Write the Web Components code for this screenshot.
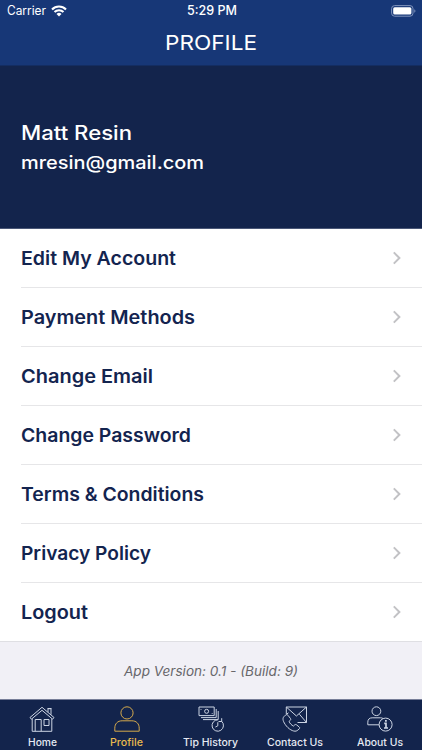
<!DOCTYPE html>
<html lang="en">
<head>
<meta charset="utf-8">
<title>Profile</title>
<style>
    html, body {
        margin: 0;
        height: 100%;
        overflow: hidden;
        font-family: Inter, "Liberation Sans", sans-serif;
    }
</style>
</head>
<body>
<profile-screen></profile-screen>

<script>
// Text stretched horizontally to a given width
class FitText extends HTMLElement {

    constructor() {
        super();
        this.attachShadow({ mode: 'open' });
    }

    connectedCallback() {
        this.shadowRoot.innerHTML = `
            <style>
                :host {
                    display: block;
                    width: max-content;
                    white-space: nowrap;
                }
                span {
                    display: inline-block;
                    transform-origin: 0 50%;
                }
            </style>
            <span><slot></slot></span>
        `;
        const span = this.shadowRoot.querySelector('span');
        const wanted = Number(this.getAttribute('width'));
        const natural = span.getBoundingClientRect().width;
        if (wanted && natural) {
            span.style.transform = `scaleX(${wanted / natural})`;
            this.style.width = `${wanted}px`;
        }
    }
}

class StatusBar extends HTMLElement {

    constructor() {
        super();
        this.attachShadow({ mode: 'open' });
    }

    connectedCallback() {
        this.shadowRoot.innerHTML = `
            <style>
                :host {
                    display: grid;
                    grid-template-columns: 1fr auto 1fr;
                    align-items: center;
                    height: 22px;
                    padding: 0 6px 0 7px;
                    color: #fff;
                    font-size: 12.5px;
                    line-height: 22px;
                }
                .carrier {
                    display: flex;
                    align-items: center;
                    gap: 5px;
                }
                .time {
                    font-weight: 550;
                }
                .battery {
                    justify-self: end;
                }
                svg {
                    display: block;
                }
            </style>
            <div class="carrier">
                <fit-text width="39">Carrier</fit-text>
                <svg width="16" height="12" viewBox="0 0 16 12" fill="none" stroke="#fff" stroke-width="2.1">
                    <path d="M1 4.4a10 10 0 0 1 14 0M3.5 7a6.5 6.5 0 0 1 9 0"/>
                    <path d="M8 11.5 5.5 9a3.6 3.6 0 0 1 5 0z" fill="#fff" stroke="none"/>
                </svg>
            </div>
            <fit-text class="time" width="50">5:29 PM</fit-text>
            <svg class="battery" width="25" height="12" viewBox="0 0 25 12">
                <rect x=".6" y=".6" width="21.4" height="10.6" rx="3" fill="none" stroke="#8094bd"/>
                <rect x="2.2" y="2.2" width="18.2" height="7.4" rx="1.5" fill="#fff"/>
                <path d="M23.3 4.2a2 2 0 0 1 0 3.6z" fill="#8094bd"/>
            </svg>
        `;
    }
}

class MenuRow extends HTMLElement {

    constructor() {
        super();
        this.attachShadow({ mode: 'open' });
    }

    connectedCallback() {
        this.shadowRoot.innerHTML = `
            <style>
                :host {
                    display: block;
                    padding-left: 21px;
                    background: #fff;
                    color: #13244f;
                }
                .row {
                    display: flex;
                    align-items: center;
                    justify-content: space-between;
                    box-sizing: border-box;
                    height: 59px;
                    padding-right: 20px;
                    border-bottom: 1px solid #e6e6e8;
                    font-size: 18.5px;
                    font-weight: 600;
                    line-height: 24px;
                }
                :host([last]) .row {
                    height: 58px;
                    border-bottom: none;
                }
            </style>
            <div class="row">
                <fit-text width="${this.getAttribute('width')}">${this.getAttribute('label')}</fit-text>
                <svg width="10" height="14" viewBox="0 0 10 14" fill="none" stroke="#c2c2c5" stroke-width="2">
                    <path d="M1.8 1.4 7.4 7l-5.6 5.6"/>
                </svg>
            </div>
        `;
    }
}

const icons = {
    home: `
        <path d="M1 11.5 13 1.3l12 10.2-1.4 1.7L13 4.3 2.4 13.2zM3.2 12.7v12.6h19.6V12.7M19 6.2V2.7h3v6M18.5 2.5h4"/>
        <path d="M6.2 25.3V13.5h6v11.8M15 13.5h5v6h-5z"/>`,
    profile: `
        <circle cx="13" cy="6.9" r="6.1"/>
        <path d="M.8 25.2v-3c0-4.5 2.8-7.4 7.3-7.4h9.8c4.5 0 7.3 2.9 7.3 7.4v3z"/>`,
    history: `
        <path d="M1 1h15.2v8.6H1zM3 11.6h15.2V3M5 13.6h15.2V5"/>
        <circle cx="8.6" cy="5.3" r="2"/>
        <path d="M3 3v.8M14.2 7v.8M23.5 15.2a5.7 5.7 0 1 1-3.6-1.4M23.7 12.2v3.3h-3.2M19.8 16.2v3.6l-2.4 1.2"/>`,
    contact: `
        <path d="M4.3 8V1h20.2v15.5H15.5M4.3 1l10.1 9L24.5 1M24.5 16.5l-7.1-8.3M4.5 8.2l2-1.4"/>
        <path d="M3.4 9.2 1.8 10.8c-1.6 1.8-.8 5 2.6 9.2 3.8 4.4 8.3 6.2 10.8 4.6l2.1-1.8c.6-.6.5-1.2 0-1.7l-2.8-2.3c-.6-.4-1.2-.4-1.8.1l-1.3 1.2c-1.7-.8-3.6-2.8-4.4-4.6l1.3-1.2c.5-.5.6-1.1.2-1.7L6 9.3c-.7-.8-1.8-.9-2.6-.1z"/>`,
    about: `
        <circle cx="9.4" cy="5.2" r="4.4"/>
        <path d="M12 18.8H.8v-2.6c0-2.9 1.7-4.4 4.4-4.4h8.2c1 0 1.8.2 2.5.6"/>
        <circle cx="18.6" cy="18.6" r="6.5"/>
        <path d="M17.2 17.3H19v4.5M17 22h4" stroke-width="1.7"/>
        <path d="M18.9 14v1.7" stroke-width="1.8"/>`
};

class TabItem extends HTMLElement {

    constructor() {
        super();
        this.attachShadow({ mode: 'open' });
    }

    connectedCallback() {
        this.shadowRoot.innerHTML = `
            <style>
                :host {
                    display: flex;
                    flex-direction: column;
                    align-items: center;
                    padding-top: 6px;
                    color: #e6eaf3;
                    --stroke: #ccd4e3;
                }
                :host([active]) {
                    color: #e8b94e;
                    --stroke: #d6aa4c;
                }
                svg {
                    display: block;
                    stroke: var(--stroke);
                }
                fit-text {
                    margin-top: 3px;
                    font-size: 10px;
                    font-weight: 500;
                    line-height: 14px;
                }
            </style>
            <svg width="26" height="26" viewBox="0 0 26 26" fill="none">${icons[this.getAttribute('icon')]}</svg>
            <fit-text width="${this.getAttribute('width')}">${this.getAttribute('label')}</fit-text>
        `;
    }
}

class ProfileScreen extends HTMLElement {

    constructor() {
        super();
        this.attachShadow({ mode: 'open' });
    }

    connectedCallback() {
        this.render();
    }

    render() {
        this.shadowRoot.innerHTML = `
            <style>
                :host {
                    display: flex;
                    flex-direction: column;
                    height: 100%;
                    background: #f1f0f6;
                }
                header {
                    height: 65px;
                    background: #173777;
                    border-bottom: 1px solid #142d61;
                }
                h1 {
                    display: flex;
                    justify-content: center;
                    margin: 7px 0 0;
                    color: #fff;
                    font-size: 20px;
                    font-weight: 400;
                    line-height: 28px;
                }
                .user {
                    display: flex;
                    flex-direction: column;
                    justify-content: center;
                    gap: 4px;
                    box-sizing: border-box;
                    height: 163px;
                    padding: 1px 0 0 21px;
                    border-bottom: 1px solid #4a5777;
                    background: #13244c;
                    color: #fff;
                    font-weight: 500;
                    line-height: 26px;
                }
                .name {
                    font-size: 19.5px;
                }
                .email {
                    font-size: 18px;
                }
                .version {
                    flex: 1;
                    display: flex;
                    justify-content: center;
                    align-items: center;
                    border-top: 1px solid #dfdfe3;
                    color: #68676b;
                    font-size: 13px;
                    font-style: italic;
                }
                nav {
                    display: grid;
                    grid-template-columns: repeat(5, 1fr);
                    height: 50px;
                    border-top: 1px solid #777e98;
                    background: #13244c;
                }
            </style>
            <header>
                <status-bar></status-bar>
                <h1><fit-text width="92">PROFILE</fit-text></h1>
            </header>
            <section class="user">
                <fit-text class="name" width="111">Matt Resin</fit-text>
                <fit-text class="email" width="183">mresin@gmail.com</fit-text>
            </section>
            <main>
                <menu-row label="Edit My Account" width="155"></menu-row>
                <menu-row label="Payment Methods" width="174"></menu-row>
                <menu-row label="Change Email" width="132"></menu-row>
                <menu-row label="Change Password" width="170"></menu-row>
                <menu-row label="Terms &amp;amp; Conditions" width="183"></menu-row>
                <menu-row label="Privacy Policy" width="130"></menu-row>
                <menu-row label="Logout" width="67" last></menu-row>
            </main>
            <div class="version"><fit-text width="174">App Version: 0.1 - (Build: 9)</fit-text></div>
            <nav>
                <tab-item icon="home" label="Home" width="29"></tab-item>
                <tab-item icon="profile" label="Profile" width="33" active></tab-item>
                <tab-item icon="history" label="Tip History" width="55"></tab-item>
                <tab-item icon="contact" label="Contact Us" width="56"></tab-item>
                <tab-item icon="about" label="About Us" width="46"></tab-item>
            </nav>
        `;
    }
}

customElements.define('fit-text', FitText);
customElements.define('status-bar', StatusBar);
customElements.define('menu-row', MenuRow);
customElements.define('tab-item', TabItem);
customElements.define('profile-screen', ProfileScreen);
</script>
</body>
</html>
